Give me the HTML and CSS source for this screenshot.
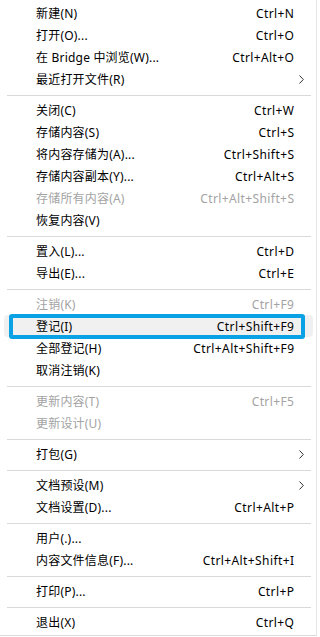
FILE: index.html
```html
<!DOCTYPE html>
<html lang="zh-CN">
<head>
<meta charset="utf-8">
<title>文件菜单</title>
<link rel="stylesheet" href="styles.css">
</head>
<body>
<div class="menu">
  <div class="item"><span class="label">新建(N)</span><span class="key">Ctrl+N</span><span class="trail"></span></div>
  <div class="item"><span class="label">打开(O)...</span><span class="key">Ctrl+O</span><span class="trail"></span></div>
  <div class="item"><span class="label">在 Bridge 中浏览(W)...</span><span class="key">Ctrl+Alt+O</span><span class="trail"></span></div>
  <div class="item"><span class="label">最近打开文件(R)</span><span class="key"></span><span class="trail"><svg class="chev" width="5" height="9" viewBox="0 0 5 9"><path d="M0.5 0.5 L4.3 4.5 L0.5 8.5" fill="none" stroke="#333" stroke-width="1"/></svg></span></div>
  <div class="sep"></div>
  <div class="item"><span class="label">关闭(C)</span><span class="key">Ctrl+W</span><span class="trail"></span></div>
  <div class="item"><span class="label">存储内容(S)</span><span class="key">Ctrl+S</span><span class="trail"></span></div>
  <div class="item"><span class="label">将内容存储为(A)...</span><span class="key">Ctrl+Shift+S</span><span class="trail"></span></div>
  <div class="item"><span class="label">存储内容副本(Y)...</span><span class="key">Ctrl+Alt+S</span><span class="trail"></span></div>
  <div class="item disabled"><span class="label">存储所有内容(A)</span><span class="key">Ctrl+Alt+Shift+S</span><span class="trail"></span></div>
  <div class="item"><span class="label">恢复内容(V)</span><span class="key"></span><span class="trail"></span></div>
  <div class="sep"></div>
  <div class="item"><span class="label">置入(L)...</span><span class="key">Ctrl+D</span><span class="trail"></span></div>
  <div class="item"><span class="label">导出(E)...</span><span class="key">Ctrl+E</span><span class="trail"></span></div>
  <div class="sep"></div>
  <div class="item disabled"><span class="label">注销(K)</span><span class="key">Ctrl+F9</span><span class="trail"></span></div>
  <div class="item hover"><span class="label">登记(I)</span><span class="key">Ctrl+Shift+F9</span><span class="trail"></span><span class="focus-ring"></span></div>
  <div class="item"><span class="label">全部登记(H)</span><span class="key">Ctrl+Alt+Shift+F9</span><span class="trail"></span></div>
  <div class="item"><span class="label">取消注销(K)</span><span class="key"></span><span class="trail"></span></div>
  <div class="sep"></div>
  <div class="item disabled"><span class="label">更新内容(T)</span><span class="key">Ctrl+F5</span><span class="trail"></span></div>
  <div class="item disabled"><span class="label">更新设计(U)</span><span class="key"></span><span class="trail"></span></div>
  <div class="sep"></div>
  <div class="item"><span class="label">打包(G)</span><span class="key"></span><span class="trail"><svg class="chev" width="5" height="9" viewBox="0 0 5 9"><path d="M0.5 0.5 L4.3 4.5 L0.5 8.5" fill="none" stroke="#333" stroke-width="1"/></svg></span></div>
  <div class="sep"></div>
  <div class="item"><span class="label">文档预设(M)</span><span class="key"></span><span class="trail"><svg class="chev" width="5" height="9" viewBox="0 0 5 9"><path d="M0.5 0.5 L4.3 4.5 L0.5 8.5" fill="none" stroke="#333" stroke-width="1"/></svg></span></div>
  <div class="item"><span class="label">文档设置(D)...</span><span class="key">Ctrl+Alt+P</span><span class="trail"></span></div>
  <div class="sep"></div>
  <div class="item"><span class="label">用户(.)...</span><span class="key"></span><span class="trail"></span></div>
  <div class="item"><span class="label">内容文件信息(F)...</span><span class="key">Ctrl+Alt+Shift+I</span><span class="trail"></span></div>
  <div class="sep"></div>
  <div class="item"><span class="label">打印(P)...</span><span class="key">Ctrl+P</span><span class="trail"></span></div>
  <div class="sep"></div>
  <div class="item"><span class="label">退出(X)</span><span class="key">Ctrl+Q</span><span class="trail"></span></div>
</div>
</body>
</html>
```

FILE: styles.css
```css
html, body {
  margin: 0;
  padding: 0;
  background: #ffffff;
}
body {
  font-family: "Noto Sans", "Noto Sans CJK SC", sans-serif;
  font-size: 12px;
  color: #000000;
  letter-spacing: 0.2px;
}
.menu {
  width: 316px;
  padding: 2px 0 2px 0;
  background: #ffffff;
  border-right: 1px solid #e6e6e6;
  border-bottom: 1px solid #d9d9d9;
  box-sizing: content-box;
}
.item {
  position: relative;
  display: flex;
  align-items: center;
  height: 22px;
  margin-left: 4px;
  width: 309px;
  padding-left: 32px;
  padding-top: 1px;
  box-sizing: border-box;
  border-radius: 4px;
  line-height: 21px;
  white-space: nowrap;
}
.label {
  flex: 1;
}
.key {
  text-align: right;
  letter-spacing: 0.4px;
  margin-right: -0.4px;
}
.trail {
  width: 19px;
  flex: none;
  display: flex;
  align-items: center;
  padding-left: 5px;
  box-sizing: border-box;
}
.chev {
  display: block;
}
.disabled {
  color: #a3a3a3;
}
.hover {
  background: #f0f0f0;
}
.focus-ring {
  position: absolute;
  left: 5px;
  top: -1px;
  width: 296px;
  height: 25px;
  border: 4px solid #0aa2e4;
  border-radius: 3px;
  box-sizing: border-box;
}
.sep {
  height: 9px;
  position: relative;
}
.sep::after {
  content: "";
  position: absolute;
  left: 7px;
  width: 304px;
  top: 5px;
  height: 1px;
  background: #d9d9d9;
}
```
